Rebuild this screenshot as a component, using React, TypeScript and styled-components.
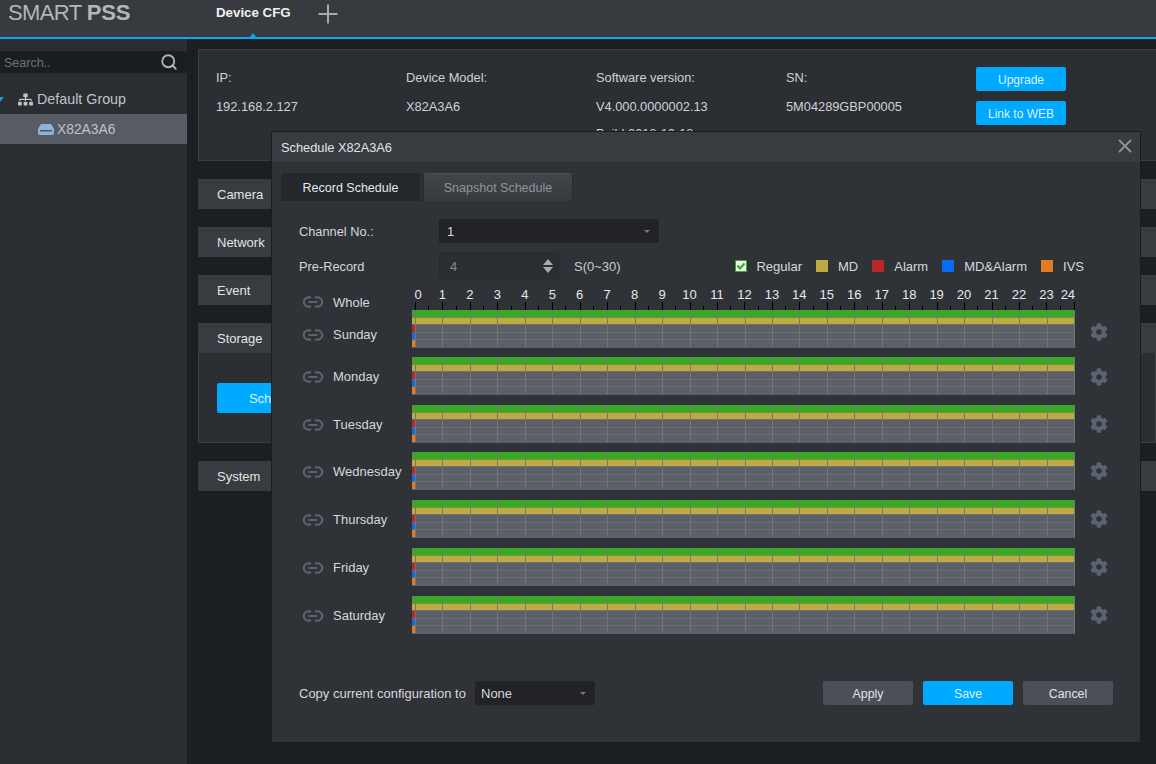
import React from 'react';
import styled, { createGlobalStyle } from 'styled-components';
import { Link2, Plus, Search, X } from 'lucide-react';
import { FaCog, FaSitemap } from 'react-icons/fa';

const GlobalStyle = createGlobalStyle`
    html, body {
        margin: 0;
        height: 100%;
        background: #1c1f22;
        overflow: hidden;
    }
    body, button {
        font-family: "Liberation Sans", Arial, sans-serif;
        font-size: 12px;
    }
    #root {
        height: 100%;
    }
`;

const Page = styled.div`
    position: relative;
    width: 1156px;
    height: 764px;
    overflow: hidden;
    display: flex;
    flex-direction: column;
    color: #d5d8db;
`;

const TopBar = styled.header`
    position: relative;
    height: 39px;
    flex: none;
    box-sizing: border-box;
    display: flex;
    align-items: flex-start;
    background: #373b40;
    border-bottom: 2px solid #0ea5ec;
`;

const Logo = styled.div`
    width: 216px;
    padding: 1px 0 0 8px;
    box-sizing: border-box;
    font-size: 22px;
    line-height: 24px;
    letter-spacing: -0.6px;
    color: #b4b6b8;
    b {
        letter-spacing: -0.2px;
    }
`;

const ActiveTab = styled.div`
    font-weight: bold;
    font-size: 13.3px;
    line-height: 25px;
    color: #f0f0f0;
    width: 97px;
`;

const AddTab = styled.div`
    margin-top: -1px;
    color: #a8aaac;
    line-height: 0;
`;

const TabMarker = styled.span`
    position: absolute;
    left: 250px;
    bottom: 0;
    width: 0;
    height: 0;
    border-left: 3px solid transparent;
    border-right: 3px solid transparent;
    border-bottom: 4px solid #0ea5ec;
`;

const Body = styled.div`
    flex: 1;
    display: flex;
    min-height: 0;
`;

const Sidebar = styled.aside`
    width: 187px;
    flex: none;
    background: #2a2e33;
    padding-top: 12px;
    box-sizing: border-box;
`;

const SearchBox = styled.div`
    height: 22px;
    box-sizing: border-box;
    margin-bottom: 11px;
    display: flex;
    align-items: center;
    justify-content: space-between;
    padding: 1px 9px 0 4px;
    background: #1b1e21;
    border-radius: 2px;
    font-size: 12.5px;
    color: #6d7175;
    svg {
        color: #b2b5b8;
        margin-top: -1px;
    }
`;

const TreeRow = styled.div<{ $selected?: boolean; $indent: number }>`
    height: 30px;
    display: flex;
    align-items: center;
    gap: ${p => (p.$selected ? 3 : 4)}px;
    padding-left: ${p => p.$indent}px;
    font-size: ${p => (p.$selected ? 13.8 : 14.3)}px;
    background: ${p => (p.$selected ? '#575c64' : 'transparent')};
    color: #bfc3c7;
`;

const Expander = styled.span`
    width: 0;
    height: 0;
    margin-left: -4px;
    margin-right: 10px;
    border-left: 4px solid transparent;
    border-right: 4px solid transparent;
    border-top: 5px solid #1a9be0;
`;

const Main = styled.main`
    flex: 1;
    padding: 10px 0 0 11px;
    display: flex;
    flex-direction: column;
    min-width: 0;
`;

const InfoPanel = styled.section`
    height: 112px;
    flex: none;
    box-sizing: border-box;
    margin-bottom: 18px;
    padding: 17px 0 0 17px;
    display: flex;
    background: #2b2f33;
    border: 1px solid #3a3e43;
    border-right: none;
`;

const InfoColumn = styled.div`
    width: 190px;
    padding-top: 4px;
    display: flex;
    flex-direction: column;
    gap: 15px;
    line-height: 14px;
    white-space: nowrap;
    color: #cfd2d5;
    font-size: 12.8px;
    div:nth-child(3) {
        margin-top: -2px;
    }
`;

const BlueButton = styled.button`
    width: 90px;
    height: 24px;
    border: none;
    border-radius: 2px;
    background: #00aaff;
    color: #d8f1ff;
    font-size: 12px;
    padding: 1px 0 0;
`;

const ButtonColumn = styled.div`
    display: flex;
    flex-direction: column;
    gap: 10px;
`;

const SectionHeader = styled.div`
    height: 30px;
    flex: none;
    padding-left: 19px;
    background: #383c40;
    line-height: 31px;
    font-size: 13px;
    color: #e2e4e6;
`;

const Section = styled.section`
    margin-bottom: 18px;
`;

const SectionBody = styled.div`
    height: 90px;
    box-sizing: border-box;
    padding: 30px 0 0 18px;
    background: #2b2f33;
    border: 1px solid #3a3e43;
    border-top: none;
`;

const ScheduleButton = styled(BlueButton)`
    width: 118px;
    height: 30px;
    font-size: 13px;
`;

const Dialog = styled.div`
    position: absolute;
    left: 271px;
    top: 131px;
    width: 870px;
    height: 612px;
    box-sizing: border-box;
    display: flex;
    flex-direction: column;
    background: #2f3337;
    border: 1px solid #1a1d20;
`;

const DialogHeader = styled.div`
    height: 30px;
    flex: none;
    display: flex;
    align-items: center;
    justify-content: space-between;
    padding: 0 4px 0 9px;
    background: #383c40;
    font-size: 12.8px;
    color: #e2e4e6;
    svg {
        color: #8e9195;
        margin-top: -2px;
    }
`;

const Tabs = styled.div`
    display: flex;
    gap: 3px;
    margin: 11px 0 18px 9px;
`;

const ScheduleTab = styled.div<{ $active?: boolean }>`
    height: 28px;
    line-height: 30px;
    text-align: center;
    font-size: 12.5px;
    width: ${p => (p.$active ? 139 : 150)}px;
    color: ${p => (p.$active ? '#e6e8ea' : '#8f9499')};
    background: ${p => (p.$active ? '#24272c' : 'linear-gradient(#43474c, #363a3f)')};
    box-shadow: ${p => (p.$active ? 'none' : 'inset -1px 0 #26292d, inset 1px 0 #26292d, inset 0 1px #4c5055')};
    border-radius: 2px 2px 0 0;
`;

const FormRow = styled.div<{ $height: number; $gap: number }>`
    display: flex;
    align-items: center;
    height: ${p => p.$height}px;
    margin-bottom: ${p => p.$gap}px;
    padding-left: 27px;
`;

const FormLabel = styled.div`
    width: 140px;
    font-size: 12.8px;
    color: #d5d8db;
`;

const SelectBox = styled.div<{ $width: number; $pad: number }>`
    width: ${p => p.$width}px;
    height: 24px;
    box-sizing: border-box;
    display: flex;
    align-items: center;
    justify-content: space-between;
    padding: 0 9px 0 ${p => p.$pad}px;
    background: #212327;
    border-radius: 2px;
    font-size: 13px;
    color: #d5d8db;
`;

const Caret = styled.span`
    width: 0;
    height: 0;
    border-left: 3px solid transparent;
    border-right: 3px solid transparent;
    border-top: 3px solid #77797c;
`;

const SpinBox = styled.div`
    width: 120px;
    height: 26px;
    box-sizing: border-box;
    display: flex;
    align-items: center;
    justify-content: space-between;
    padding: 0 5px 0 10px;
    background: #2a2d31;
    border: 1px solid #26292d;
    border-radius: 2px;
    font-size: 13px;
    color: #85898d;
`;

const Unit = styled.div`
    margin-left: 15px;
    font-size: 13px;
    color: #c8cbce;
`;

const Legend = styled.div`
    margin-left: auto;
    margin-right: 56px;
    display: flex;
    gap: 14px;
`;

const LegendItem = styled.div<{ $gap?: number }>`
    display: flex;
    align-items: center;
    gap: ${p => p.$gap || 10}px;
    font-size: 13px;
    color: #d5d8db;
`;

const Swatch = styled.span<{ $color: string }>`
    width: 12px;
    height: 12px;
    background: ${p => p.$color};
`;

const CheckBox = styled.span`
    width: 12px;
    height: 12px;
    box-sizing: border-box;
    border: 1px solid #3aa827;
    background: #ecefec;
    line-height: 0;
`;

const ScheduleTable = styled.div`
    padding-left: 27px;
`;

const RulerRow = styled.div`
    display: flex;
    height: 23px;
`;

const DayLabel = styled.div<{ $nudge?: number }>`
    width: 113px;
    flex: none;
    height: 37px;
    display: flex;
    align-items: center;
    gap: 9px;
    padding-left: 3px;
    box-sizing: border-box;
    font-size: 13px;
    color: #d5d8db;
    white-space: nowrap;
    transform: translateY(${p => p.$nudge ?? 1}px);
    svg {
        color: #5e636c;
        flex: none;
    }
`;

const WholeLabel = styled(DayLabel)`
    height: 30px;
`;

const Ruler = styled.div`
    display: flex;
    padding-left: 3px;
`;

const HourCell = styled.div<{ $last?: boolean }>`
    width: ${p => (p.$last ? 1 : 27.46)}px;
    height: 23px;
    background:
        linear-gradient(#000, #000) 0 100% / 1px 8px no-repeat,
        ${p => (p.$last ? 'none' : 'linear-gradient(#000, #000) 50% 100% / 1px 4px no-repeat')};
`;

const HourLabel = styled.span<{ $shift: number }>`
    display: inline-block;
    font-size: 13px;
    line-height: 14px;
    color: #e6e8ea;
    transform: translate(calc(-50% + ${p => p.$shift}px), 1px);
`;

const DayRow = styled.div<{ $pitch: number }>`
    display: flex;
    align-items: flex-start;
    height: ${p => p.$pitch}px;
`;

const Lanes = styled.div`
    width: 663px;
    height: 37.5px;
    flex: none;
    display: flex;
    flex-direction: column;
`;

const Lane = styled.div<{ $color: string; $mark?: string; $line?: string }>`
    height: 7.5px;
    box-sizing: border-box;
    border-bottom: 1px solid ${p => p.$line || '#6f6f6f'};
    background-color: ${p => p.$color};
    background-image:
        linear-gradient(${p => p.$mark || 'transparent'}, ${p => p.$mark || 'transparent'}),
        repeating-linear-gradient(90deg, #77776f 0 1px, transparent 1px 27.46px);
    background-size: 3px 100%, 660px 100%;
    background-position: 0 0, 3px 0;
    background-repeat: no-repeat;
`;

const GearButton = styled.div<{ $nudge?: number }>`
    height: 37px;
    margin-left: 15px;
    display: flex;
    align-items: center;
    color: #5b6270;
    transform: translateY(${p => p.$nudge || 0}px);
`;

const DialogFooter = styled.div`
    margin-top: auto;
    display: flex;
    align-items: center;
    height: 24px;
    padding: 0 27px 37px 27px;
`;

const CopyLabel = styled.div`
    font-size: 13px;
    color: #d5d8db;
    width: 176px;
    white-space: nowrap;
`;

const FooterButtons = styled.div`
    margin-left: auto;
    display: flex;
    gap: 10px;
`;

const FooterButton = styled.button<{ $primary?: boolean }>`
    width: 90px;
    height: 24px;
    border: none;
    border-radius: 2px;
    padding: 1px 0 0;
    font-size: 12.3px;
    background: ${p => (p.$primary ? '#00aaff' : '#4b4f58')};
    color: ${p => (p.$primary ? '#d8f1ff' : '#e2e4e6')};
`;

const info = [
    ['IP:', '192.168.2.127'],
    ['Device Model:', 'X82A3A6'],
    ['Software version:', 'V4.000.0000002.13', 'Build:2018-10-18'],
    ['SN:', '5M04289GBP00005'],
];

const days = [
    { name: 'Sunday', pitch: 47, nudge: 6, gear: 3 },
    { name: 'Monday', pitch: 48, gear: 1 },
    { name: 'Tuesday', pitch: 47 },
    { name: 'Wednesday', pitch: 48 },
    { name: 'Thursday', pitch: 48 },
    { name: 'Friday', pitch: 48 },
    { name: 'Saturday', pitch: 37 },
];

const legend = [
    { label: 'MD', color: '#bdaa43' },
    { label: 'Alarm', color: '#b8282a' },
    { label: 'MD&Alarm', color: '#0a6cf0' },
    { label: 'IVS', color: '#e07c24' },
];

const hours = Array.from({ length: 25 }, (_, i) => i);

const hourShift = (h: number) => {
    if (h === 0) return 3;
    if (h === 24) return -6;
    return 0;
};

const DeviceIcon = () => (
    <svg width="16" height="11" viewBox="0 0 16 11">
        <path d="M3 0h10l3 5v4a2 2 0 0 1-2 2H2a2 2 0 0 1-2-2V5z" fill="#8db4d8" />
        <rect x="2" y="6" width="12" height="1.5" fill="#3f5a75" />
    </svg>
);

const SpinArrows = () => (
    <svg width="10" height="14" viewBox="0 0 10 14">
        <path d="M5 0l5 6H0zM5 14L0 8h10z" fill="#a8acb0" />
    </svg>
);

const CheckMark = () => (
    <svg width="10" height="10" viewBox="0 0 10 10">
        <path d="M1.5 4.5l2.5 3 4.5-5" fill="none" stroke="#3aa827" strokeWidth="2" />
    </svg>
);

const DayLanes = () => (
    <Lanes>
        <Lane $color="#3aa827" $line="#7c8a48" />
        <Lane $color="#bdaa43" />
        <Lane $color="#5b6068" $mark="#b8282a" />
        <Lane $color="#5b6068" $mark="#0a6cf0" />
        <Lane $color="#5b6068" $mark="#e07c24" $line="#5b6068" />
    </Lanes>
);

const App: React.FC = () => {
    return (
        <Page>
            <GlobalStyle />
            <TopBar>
                <Logo>SMART <b>PSS</b></Logo>
                <ActiveTab>Device CFG</ActiveTab>
                <AddTab><Plus size={30} strokeWidth={1.6} /></AddTab>
                <TabMarker />
            </TopBar>
            <Body>
                <Sidebar>
                    <SearchBox>
                        Search..
                        <Search size={18} strokeWidth={2.4} />
                    </SearchBox>
                    <TreeRow $indent={0}>
                        <Expander />
                        <FaSitemap size={15} />
                        Default Group
                    </TreeRow>
                    <TreeRow $indent={38} $selected>
                        <DeviceIcon />
                        X82A3A6
                    </TreeRow>
                </Sidebar>
                <Main>
                    <InfoPanel>
                        {info.map(col => (
                            <InfoColumn key={col[0]}>
                                {col.map(text => <div key={text}>{text}</div>)}
                            </InfoColumn>
                        ))}
                        <ButtonColumn>
                            <BlueButton>Upgrade</BlueButton>
                            <BlueButton>Link to WEB</BlueButton>
                        </ButtonColumn>
                    </InfoPanel>
                    <Section><SectionHeader>Camera</SectionHeader></Section>
                    <Section><SectionHeader>Network</SectionHeader></Section>
                    <Section><SectionHeader>Event</SectionHeader></Section>
                    <Section>
                        <SectionHeader>Storage</SectionHeader>
                        <SectionBody>
                            <ScheduleButton>Schedule</ScheduleButton>
                        </SectionBody>
                    </Section>
                    <Section><SectionHeader>System</SectionHeader></Section>
                </Main>
            </Body>
            <Dialog>
                <DialogHeader>
                    Schedule X82A3A6
                    <X size={22} strokeWidth={2} />
                </DialogHeader>
                <Tabs>
                    <ScheduleTab $active>Record Schedule</ScheduleTab>
                    <ScheduleTab>Snapshot Schedule</ScheduleTab>
                </Tabs>
                <FormRow $height={24} $gap={10}>
                    <FormLabel>Channel No.:</FormLabel>
                    <SelectBox $width={220} $pad={8}>1<Caret /></SelectBox>
                </FormRow>
                <FormRow $height={26} $gap={8}>
                    <FormLabel>Pre-Record</FormLabel>
                    <SpinBox>4<SpinArrows /></SpinBox>
                    <Unit>S(0~30)</Unit>
                    <Legend>
                        <LegendItem $gap={9}>
                            <CheckBox><CheckMark /></CheckBox>
                            Regular
                        </LegendItem>
                        {legend.map(item => (
                            <LegendItem key={item.label}>
                                <Swatch $color={item.color} />
                                {item.label}
                            </LegendItem>
                        ))}
                    </Legend>
                </FormRow>
                <ScheduleTable>
                    <RulerRow>
                        <WholeLabel $nudge={0}>
                            <Link2 size={22} strokeWidth={2.4} />
                            Whole
                        </WholeLabel>
                        <Ruler>
                            {hours.map(h => (
                                <HourCell key={h} $last={h === 24}>
                                    <HourLabel $shift={hourShift(h)}>{h}</HourLabel>
                                </HourCell>
                            ))}
                        </Ruler>
                    </RulerRow>
                    {days.map(day => (
                        <DayRow key={day.name} $pitch={day.pitch}>
                            <DayLabel $nudge={day.nudge}>
                                <Link2 size={22} strokeWidth={2.4} />
                                {day.name}
                            </DayLabel>
                            <DayLanes />
                            <GearButton $nudge={day.gear}><FaCog size={18} /></GearButton>
                        </DayRow>
                    ))}
                </ScheduleTable>
                <DialogFooter>
                    <CopyLabel>Copy current configuration to</CopyLabel>
                    <SelectBox $width={120} $pad={6}>None<Caret /></SelectBox>
                    <FooterButtons>
                        <FooterButton>Apply</FooterButton>
                        <FooterButton $primary>Save</FooterButton>
                        <FooterButton>Cancel</FooterButton>
                    </FooterButtons>
                </DialogFooter>
            </Dialog>
        </Page>
    );
};

export default App;
